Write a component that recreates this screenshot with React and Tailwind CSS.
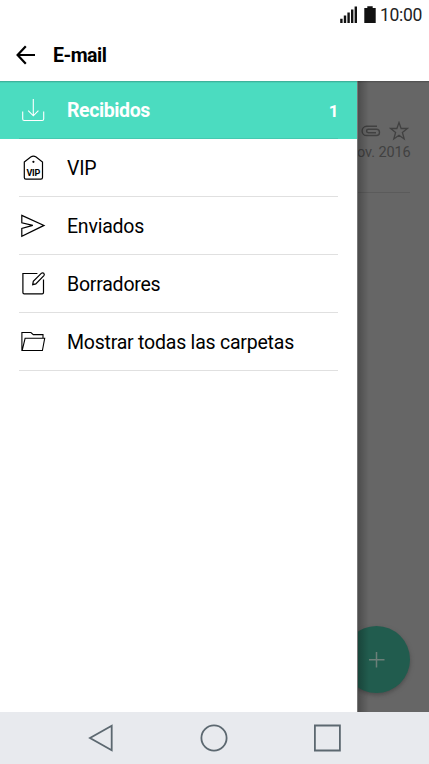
import React from "react";

const DownloadIcon = () => (
  <svg width="28" height="28" viewBox="0 0 28 28" fill="none" stroke="currentColor" strokeWidth="1.1">
    <path d="M14.3 3v16.6M9.2 14.6l5.1 5.2 5.1-5.2" />
    <path d="M3.7 15.6v7.4q0 1.5 1.5 1.5h18q1.5 0 1.5-1.5v-7.4" />
  </svg>
);

const VipIcon = () => (
  <svg width="28" height="28" viewBox="0 0 28 28" fill="none" stroke="currentColor" strokeWidth="1.2">
    <path d="M5.3 8l6.4-5q2.7-1.6 5.4 0l6.4 5v15.6q0 1.6-1.6 1.6H6.9q-1.6 0-1.6-1.6z" />
    <circle cx="14.4" cy="7.8" r="1.1" fill="currentColor" stroke="none" />
    <text
      x="14.3"
      y="21.8"
      textAnchor="middle"
      fill="currentColor"
      stroke="none"
      className="font-[Roboto] text-[9px] font-bold tracking-[-0.2px]"
    >
      VIP
    </text>
  </svg>
);

const SendIcon = () => (
  <svg width="28" height="28" viewBox="0 0 28 28" fill="none" stroke="currentColor" strokeWidth="1.2">
    <path d="M2.8 3.4L25 13.4 2.8 24.2v-7.8l11-3-11-2.6z" />
  </svg>
);

const DraftIcon = () => (
  <svg width="28" height="28" viewBox="0 0 28 28" fill="none" stroke="currentColor" strokeWidth="1.2">
    <path d="M18.4 3.5H3.9v19q0 1.3 1.3 1.3h18q1.3 0 1.3-1.3V9.4" />
    <path d="M13.7 14.7l.6-3.3 8.2-8.2q1.2-.9 2.3.1 1 1.1.1 2.3l-8.1 8.3z" />
  </svg>
);

const FolderIcon = () => (
  <svg width="28" height="28" viewBox="0 0 28 28" fill="none" stroke="currentColor" strokeWidth="1.1">
    <path d="M24 10V6.6h-9.7l-2.4-2.1H2.9v18h20.5l2.3-12.2H6.1L3.2 22.4" />
  </svg>
);

const folders = [
  { label: "Recibidos", icon: DownloadIcon, count: 1, active: true },
  { label: "VIP", icon: VipIcon },
  { label: "Enviados", icon: SendIcon },
  { label: "Borradores", icon: DraftIcon },
  { label: "Mostrar todas las carpetas", icon: FolderIcon },
];

const StatusBar = () => (
  <div className="flex h-[30px] items-center justify-end pr-[7px] text-[#222]">
    <svg width="18" height="18" viewBox="0 0 18 18" fill="#111">
      <path d="M.2 12.8h2.4V17H.2zM3.8 9.6h2.4V17H3.8zM7.4 6.6h2.4V17H7.4zM11 3.6h2.4V17H11zM14.6.4H17V17h-2.4z" />
    </svg>
    <svg className="ml-[6px]" width="12" height="18" viewBox="0 0 12 18" fill="#111">
      <path d="M3.3.3h5.4v1.8h3V17H.3V2.1h3z" />
    </svg>
    <span className="ml-[4px] pt-[2px] text-[17.5px] leading-none tracking-[-0.3px]">10:00</span>
  </div>
);

const Header = () => (
  <div className="flex h-[51px] items-center pb-px pl-4 text-black">
    <svg width="20" height="20" viewBox="0 0 20 20" fill="none" stroke="currentColor" strokeWidth="2.2">
      <path d="M19 10H1.8M9.8 1.3L1.6 10l8.2 8.7" />
    </svg>
    <h1 className="ml-[17px] pt-[2px] text-[19.5px] font-bold tracking-[-0.5px]">E-mail</h1>
  </div>
);

const FolderRow = ({ label, icon: Icon, count, active }) => (
  <li
    className={
      active
        ? "h-[58px] bg-[#4bdcc0] px-[19px] font-bold tracking-[-0.4px] text-white"
        : "h-[58px] px-[19px] tracking-[-0.22px] text-black"
    }
  >
    <div
      className={
        active
          ? "flex h-full items-center border-b border-[#45c9b0]"
          : "flex h-full items-center border-b border-[#e0e0e0]"
      }
    >
      <Icon />
      <span className="ml-5 pt-[3px] text-[19.5px]">{label}</span>
      {count && <span className="ml-auto pt-[4px] text-[17px]">{count}</span>}
    </div>
  </li>
);

// Inbox list, dimmed behind the drawer
const Inbox = () => (
  <div className="relative flex-1 overflow-hidden bg-[#666] text-[#414141]">
    <div className="mr-[19px] h-[112px] border-b border-[#5b5b5b] pt-[40px]">
      <div className="flex justify-end gap-[7px] pr-px">
        <svg className="-translate-x-px" width="20" height="20" viewBox="0 0 20 20" fill="none" stroke="currentColor" strokeWidth="1.4">
          <path d="M15 11.7H7.3a1.7 1.7 0 010-3.4h8.1a3.1 3.1 0 010 6.2H5.7a4.6 4.6 0 010-9.2H16" />
        </svg>
        <svg width="20" height="20" viewBox="0 0 20 20" fill="none" stroke="currentColor" strokeWidth="1.3">
          <path d="M10 1.5l2.1 6h6.3l-5 3.9 1.8 6.6-5.2-3.8L4.8 18l1.8-6.6-5-3.9h6.3z" />
        </svg>
      </div>
      <p className="mt-[2px] pr-px text-right text-[14.5px] leading-5 tracking-[-0.1px] whitespace-nowrap">ov. 2016</p>
    </div>
    <button className="absolute right-[19px] bottom-[19px] flex h-[67px] w-[67px] items-center justify-center rounded-full bg-[#215c4e] shadow-[0_2px_4px_#4c4c4c]">
      <svg width="16" height="16" viewBox="0 0 16 16" stroke="#6c7f79" strokeWidth="1.5">
        <path d="M7.5 0v15.5M0 7.8h15.5" />
      </svg>
    </button>
    {/* Drawer edge shadow */}
    <div className="absolute inset-y-0 left-0 w-3 border-l border-[#777] bg-gradient-to-r from-black/25 to-transparent" />
  </div>
);

const NavigationBar = () => (
  <div className="flex h-[52px] items-center bg-[#e8eaee] pl-[88px] text-[#5c6870]">
    <svg width="26" height="28" viewBox="0 0 26 28" fill="none" stroke="currentColor" strokeWidth="1.8">
      <path d="M23.7 1.8v24.4L2 14z" />
    </svg>
    <svg className="ml-[86px]" width="28" height="28" viewBox="0 0 28 28" fill="none" stroke="currentColor" strokeWidth="1.8">
      <circle cx="14" cy="14" r="12.6" />
    </svg>
    <svg className="ml-[85px]" width="28" height="28" viewBox="0 0 28 28" fill="none" stroke="currentColor" strokeWidth="1.8">
      <path d="M1.9 1.5h25v25h-25z" />
    </svg>
  </div>
);

const App = () => {
  return (
    <div className="flex h-[764px] w-[429px] flex-col overflow-hidden bg-white font-[Roboto,sans-serif]">
      <StatusBar />
      <Header />
      <div className="relative flex flex-1">
        <ul className="w-[357px] shrink-0 bg-white">
          {folders.map((folder) => (
            <FolderRow key={folder.label} {...folder} />
          ))}
        </ul>
        <Inbox />
        {/* Header shadow */}
        <div className="absolute inset-x-0 top-0 h-0.5 bg-gradient-to-b from-black/25 to-transparent" />
      </div>
      <NavigationBar />
    </div>
  );
};

export default App;
